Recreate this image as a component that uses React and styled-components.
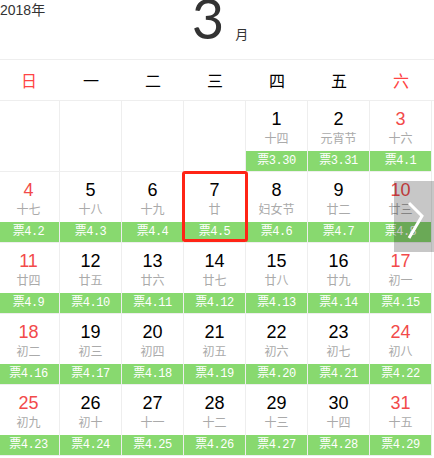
import React from "react";
import styled, { createGlobalStyle } from "styled-components";

const Global = createGlobalStyle`
  html, body { margin: 0; padding: 0; background: #fff; overflow: hidden; }
  body { font-family: "Liberation Sans", "Noto Sans CJK SC", sans-serif; }
`;

const Page = styled.div`
  position: relative;
  width: 434px;
  height: 458px;
  overflow: hidden;
`;

const Header = styled.header`
  height: 59px;
  border-bottom: 1px solid #eee;
  display: grid;
  grid-template-columns: 1fr auto 1fr;
  align-items: start;
`;

const Year = styled.div`
  font-size: 14px;
  line-height: 20px;
  color: #333;
  font-family: "Liberation Sans", "Noto Sans CJK SC", sans-serif;
`;

const MonthBox = styled.div`
  display: flex;
  align-items: baseline;
  height: 59px;
  margin-left: 6px;
  margin-top: -2px;
`;

const MonthNum = styled.span`
  font-family: "Lato", "Open Sans", sans-serif;
  font-weight: 400;
  font-size: 56px;
  line-height: 40px;
  color: #333;
`;

const MonthUnit = styled.span`
  font-family: "Noto Sans CJK SC", sans-serif;
  font-size: 13px;
  color: #333;
  margin-left: 11px;
`;

const Weekdays = styled.div`
  display: grid;
  grid-template-columns: repeat(7, 62px);
  margin-left: -2px;
  height: 40px;
  border-bottom: 1px solid #eee;
`;

const Weekday = styled.div`
  display: flex;
  align-items: center;
  justify-content: center;
  font-family: "Noto Sans CJK SC", sans-serif;
  font-size: 16px;
  color: ${(p) => (p.$weekend ? "#f44" : "#000")};
`;

const Days = styled.div`
  display: grid;
  grid-template-columns: repeat(7, 62px);
  margin-left: -2px;
`;

const Cell = styled.div`
  position: relative;
  height: 70px;
  border-right: 1px solid #eee;
  border-bottom: 1px solid #eee;
  display: flex;
  flex-direction: column;
  align-items: center;
`;

const DayNum = styled.div`
  margin-top: 7px;
  font-family: "Liberation Sans", sans-serif;
  font-size: 18px;
  line-height: 22px;
  color: ${(p) => (p.$weekend ? "#f24a4a" : "#000")};
`;

const Lunar = styled.div`
  font-family: "Noto Sans CJK SC", sans-serif;
  font-size: 12px;
  line-height: 16px;
  color: #aaa;
`;

const Ticket = styled.div`
  margin-top: auto;
  align-self: stretch;
  height: 20px;
  line-height: 20px;
  background: #88d96f;
  color: #fff;
  text-align: center;
  font-family: "Liberation Mono", "Noto Sans CJK SC", monospace;
  font-size: 12px;
  letter-spacing: -0.5px;
  white-space: nowrap;
`;

const Selected = styled.div`
  position: absolute;
  z-index: 1;
  top: -1px;
  left: -2px;
  right: -3px;
  bottom: 0;
  border: 3px solid #ff2416;
  border-radius: 3px;
  pointer-events: none;
`;

const NextButton = styled.button`
  position: absolute;
  z-index: 2;
  right: 0;
  top: 181px;
  width: 40px;
  height: 71px;
  border: 0;
  padding: 0;
  background: rgba(0, 0, 0, 0.22);
  display: flex;
  align-items: center;
  justify-content: center;
  cursor: pointer;
`;

const weekdays = ["日", "一", "二", "三", "四", "五", "六"];
const lunar = [
  "十四", "元宵节", "十六", "十七", "十八", "十九", "廿", "妇女节", "廿二", "廿三",
  "廿四", "廿五", "廿六", "廿七", "廿八", "廿九", "初一", "初二", "初三", "初四",
  "初五", "初六", "初七", "初八", "初九", "初十", "十一", "十二", "十三", "十四", "十五",
];

function ticketDate(day) {
  const d = new Date(2018, 2, day + 29);
  return `${d.getMonth() + 1}.${d.getDate()}`;
}

export default function App() {
  const offset = 4;
  const cells = [];
  for (let i = 0; i < offset; i++) cells.push(<Cell key={"e" + i} />);
  for (let day = 1; day <= 31; day++) {
    const dow = (offset + day - 1) % 7;
    const weekend = dow === 0 || dow === 6;
    cells.push(
      <Cell key={day}>
        <DayNum $weekend={weekend}>{day}</DayNum>
        <Lunar>{lunar[day - 1]}</Lunar>
        <Ticket>票{ticketDate(day)}</Ticket>
        {day === 7 && <Selected />}
      </Cell>
    );
  }
  return (
    <Page>
      <Global />
      <Header>
        <Year>2018年</Year>
        <MonthBox>
          <MonthNum>3</MonthNum>
          <MonthUnit>月</MonthUnit>
        </MonthBox>
        <div />
      </Header>
      <Weekdays>
        {weekdays.map((w, i) => (
          <Weekday key={w} $weekend={i === 0 || i === 6}>
            {w}
          </Weekday>
        ))}
      </Weekdays>
      <Days>{cells}</Days>
      <NextButton aria-label="下一月">
        <svg width="40" height="71" viewBox="0 0 40 71">
          <polyline
            points="15,22 28,35 15,57"
            fill="none"
            stroke="#fff"
            strokeWidth="3"
            strokeLinecap="butt"
          />
        </svg>
      </NextButton>
    </Page>
  );
}
